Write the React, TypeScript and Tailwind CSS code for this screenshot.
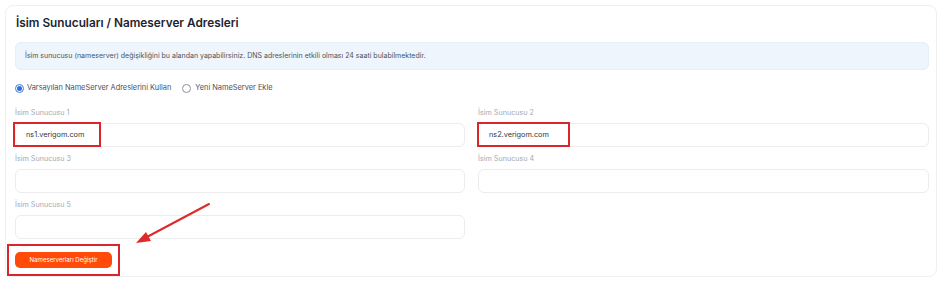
import React from "react";

const font = { fontFamily: "Inter, 'Noto Sans', sans-serif" };

function Field({ label, value }: { label: string; value?: string }) {
  return (
    <div className="flex flex-col">
      <div className="h-[12px] mb-[4px] text-[7.2px] leading-[12px] text-[#a3a8b0]">{label}</div>
      <div className="h-[24px] rounded-[6px] border border-[#ececec] bg-white flex items-center pl-[10px] text-[7.3px] text-[#2f3640]">
        {value}
      </div>
    </div>
  );
}

export default function App() {
  return (
    <div className="relative w-[945px] h-[289px] bg-white pt-[5px] pl-[5px]" style={font}>
      <div className="w-[932px] h-[272px] rounded-[8px] border border-[#efefef] pl-[9px] pt-[8px]">
        <h1 className="h-[18px] text-[11.8px] leading-[18px] font-semibold text-[#1e2430] pl-[1px]">
          İsim Sunucuları / Nameserver Adresleri
        </h1>
        <div className="mt-[10px] w-[914px] h-[28px] rounded-[6px] bg-[#eff5fc] border border-[#e6eef8] flex items-center pl-[9px] text-[7px] text-[#4a5260]">
          İsim sunucusu (nameserver) değişikliğini bu alandan yapabilirsiniz. DNS adreslerinin etkili olması 24 saati bulabilmektedir.
        </div>
        <div className="mt-[12px] h-[12px] flex items-center text-[7.4px] text-[#4a5160]">
          <span className="w-[9px] h-[9px] rounded-full border border-[#3b7ddd] flex items-center justify-center">
            <span className="w-[5px] h-[5px] rounded-full bg-[#2f6fd6]" />
          </span>
          <span className="ml-[3px]">Varsayılan NameServer Adreslerini Kullan</span>
          <span className="ml-[11px] w-[9px] h-[9px] rounded-full border border-[#8a9099] bg-white" />
          <span className="ml-[4px]">Yeni NameServer Ekle</span>
        </div>
        <div className="mt-[13px] w-[914px] grid grid-cols-[450px_451px] gap-x-[13px] gap-y-[6px]">
          <Field label="İsim Sunucusu 1" value="ns1.verigom.com" />
          <Field label="İsim Sunucusu 2" value="ns2.verigom.com" />
          <Field label="İsim Sunucusu 3" />
          <Field label="İsim Sunucusu 4" />
          <Field label="İsim Sunucusu 5" />
        </div>
        <button className="mt-[13px] w-[97px] h-[16px] rounded-[5px] bg-[#ff4a0a] text-white text-[6.1px] flex items-center justify-center">
          Nameserverları Değiştir
        </button>
      </div>

      <div className="absolute left-[13px] top-[122px] w-[88px] h-[25px] border-2 border-[#d9262c]" />
      <div className="absolute left-[477px] top-[122px] w-[93px] h-[25px] border-2 border-[#d9262c]" />
      <div className="absolute left-[7px] top-[244px] w-[113px] h-[32px] border-2 border-[#d9262c]" />
      <svg className="absolute left-0 top-0" width="945" height="289" viewBox="0 0 945 289">
        <line x1="209" y1="204" x2="146" y2="237.5" stroke="#de2a2a" strokeWidth="2" strokeLinecap="round" />
        <polygon points="136,243 151,241 146,232" fill="#de2a2a" />
      </svg>
    </div>
  );
}
